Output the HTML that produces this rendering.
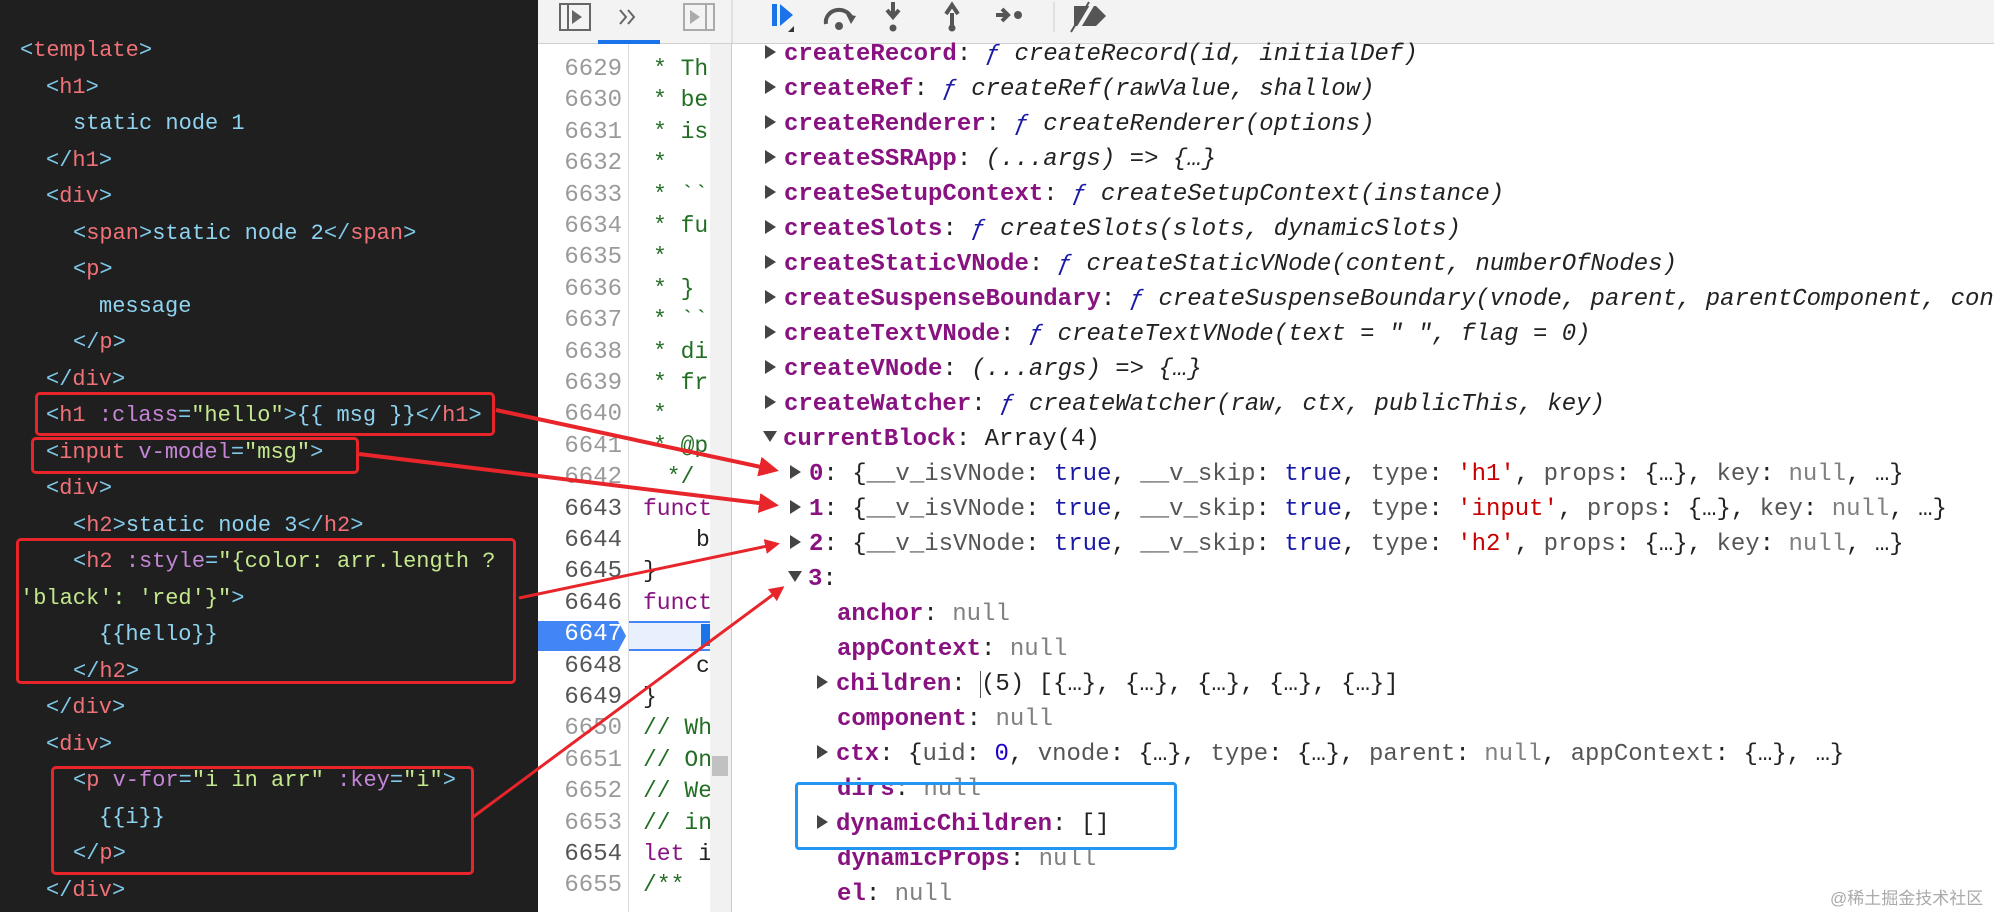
<!DOCTYPE html>
<html><head><meta charset="utf-8"><style>
*{margin:0;padding:0;box-sizing:border-box}
body{width:1994px;height:912px;overflow:hidden;background:#fff;position:relative;font-family:"Liberation Mono",monospace}
#left{position:absolute;left:0;top:0;width:538px;height:912px;background:#1f1f1f;overflow:hidden}
#left .r{position:absolute;left:0;height:36.5px;line-height:36.5px;font-size:22px;white-space:pre;color:#8fd3f0}
.b{color:#7fc8e8}.t{color:#f07178}.x{color:#8fd3f0}.a{color:#c586d8}.s{color:#c3e88d}
#tb{position:absolute;left:538px;top:0;width:1456px;height:44px;background:#f3f3f3;border-bottom:1px solid #d0d0d0}
#gut{position:absolute;left:538px;top:44px;width:90px;height:868px;background:#fff}
#code{position:absolute;left:628px;top:44px;width:82px;height:868px;background:#fff;border-left:1px solid #ddd;overflow:hidden}
#sb{position:absolute;left:710px;top:44px;width:22px;height:868px;background:#f1f1f1;border-right:1px solid #ccc}
.g{position:absolute;right:6px;width:79px;text-align:right;font-size:24px;color:#9a9a9a;height:31.4px;line-height:31.4px}
.c{position:absolute;left:24px;font-size:23px;white-space:pre;height:31.4px;line-height:31.4px;color:#236e25}
.p{position:absolute;height:35px;line-height:35px;font-size:24px;white-space:pre;color:#222}
.k{color:#881280;font-weight:bold}.f{color:#1a1aa6;font-style:italic}.i{font-style:italic;color:#222}
.tr{color:#1a1aa6}.st{color:#c80000}.nu{color:#808080}.n{color:#1c00cf}.gy{color:#555}
.tri{display:inline-block;width:0;height:0;border-top:7px solid transparent;border-bottom:7px solid transparent;border-left:11px solid #444;margin-right:8px;vertical-align:middle;position:relative;top:-2px}
.tri.d{border-left:7px solid transparent;border-right:7px solid transparent;border-top:11px solid #444;border-bottom:0;margin-right:6px}
.box{position:absolute;border:3px solid #e8252a;border-radius:5px}
</style></head><body>
<div id="left">
<div class="r" style="top:33px;left:20px"><span class="b">&lt;</span><span class="t">template</span><span class="b">&gt;</span></div>
<div class="r" style="top:69.5px;left:46px"><span class="b">&lt;</span><span class="t">h1</span><span class="b">&gt;</span></div>
<div class="r" style="top:106px;left:73px">static node 1</div>
<div class="r" style="top:142.5px;left:46px"><span class="b">&lt;/</span><span class="t">h1</span><span class="b">&gt;</span></div>
<div class="r" style="top:179px;left:46px"><span class="b">&lt;</span><span class="t">div</span><span class="b">&gt;</span></div>
<div class="r" style="top:215.5px;left:73px"><span class="b">&lt;</span><span class="t">span</span><span class="b">&gt;</span>static node 2<span class="b">&lt;/</span><span class="t">span</span><span class="b">&gt;</span></div>
<div class="r" style="top:252px;left:73px"><span class="b">&lt;</span><span class="t">p</span><span class="b">&gt;</span></div>
<div class="r" style="top:288.5px;left:99px">message</div>
<div class="r" style="top:325px;left:73px"><span class="b">&lt;/</span><span class="t">p</span><span class="b">&gt;</span></div>
<div class="r" style="top:361.5px;left:46px"><span class="b">&lt;/</span><span class="t">div</span><span class="b">&gt;</span></div>
<div class="r" style="top:398px;left:46px"><span class="b">&lt;</span><span class="t">h1</span> <span class="a">:class</span><span class="b">=</span><span class="s">"hello"</span><span class="b">&gt;</span>{{ msg }}<span class="b">&lt;/</span><span class="t">h1</span><span class="b">&gt;</span></div>
<div class="r" style="top:434.5px;left:46px"><span class="b">&lt;</span><span class="t">input</span> <span class="a">v-model</span><span class="b">=</span><span class="s">"msg"</span><span class="b">&gt;</span></div>
<div class="r" style="top:471px;left:46px"><span class="b">&lt;</span><span class="t">div</span><span class="b">&gt;</span></div>
<div class="r" style="top:507.5px;left:73px"><span class="b">&lt;</span><span class="t">h2</span><span class="b">&gt;</span>static node 3<span class="b">&lt;/</span><span class="t">h2</span><span class="b">&gt;</span></div>
<div class="r" style="top:544px;left:73px"><span class="b">&lt;</span><span class="t">h2</span> <span class="a">:style</span><span class="b">=</span><span class="s">"{color: arr.length ?</span></div>
<div class="r" style="top:580.5px;left:20px"><span class="s">'black': 'red'}"</span><span class="b">&gt;</span></div>
<div class="r" style="top:617px;left:99px">{{hello}}</div>
<div class="r" style="top:653.5px;left:73px"><span class="b">&lt;/</span><span class="t">h2</span><span class="b">&gt;</span></div>
<div class="r" style="top:690px;left:46px"><span class="b">&lt;/</span><span class="t">div</span><span class="b">&gt;</span></div>
<div class="r" style="top:726.5px;left:46px"><span class="b">&lt;</span><span class="t">div</span><span class="b">&gt;</span></div>
<div class="r" style="top:763px;left:73px"><span class="b">&lt;</span><span class="t">p</span> <span class="a">v-for</span><span class="b">=</span><span class="s">"i in arr"</span> <span class="a">:key</span><span class="b">=</span><span class="s">"i"</span><span class="b">&gt;</span></div>
<div class="r" style="top:799.5px;left:99px">{{i}}</div>
<div class="r" style="top:836px;left:73px"><span class="b">&lt;/</span><span class="t">p</span><span class="b">&gt;</span></div>
<div class="r" style="top:872.5px;left:46px"><span class="b">&lt;/</span><span class="t">div</span><span class="b">&gt;</span></div>
<div class="box" style="left:35px;top:392px;width:460px;height:44px"></div>
<div class="box" style="left:31px;top:437px;width:328px;height:37px"></div>
<div class="box" style="left:16px;top:538px;width:500px;height:146px"></div>
<div class="box" style="left:51px;top:766px;width:423px;height:109px"></div>
</div>

<div id="tb">
<svg width="1456" height="44" style="position:absolute;left:0;top:0">
<g fill="none" stroke="#666" stroke-width="2">
<rect x="22" y="4" width="30" height="26"/><line x1="30" y1="4" x2="30" y2="30"/>
<rect x="146" y="4" width="30" height="26" stroke="#aaa"/><line x1="168" y1="4" x2="168" y2="30" stroke="#aaa"/>
<path d="M82 10l6 7-6 7M90 10l6 7-6 7"/>
</g>
<path d="M34 10l10 7-10 7z" fill="#666"/><path d="M152 10l10 7-10 7z" fill="#aaa"/>
<rect x="60" y="40" width="62" height="4" fill="#1a73e8"/>
<line x1="194" y1="0" x2="194" y2="44" stroke="#ccc"/>
<rect x="234" y="4" width="5" height="22" fill="#1a73e8"/><path d="M242 4l13 11-13 11z" fill="#1a73e8"/><path d="M250 32l6-6v6z" fill="#333"/>
<path d="M288 24a13 12 0 0 1 26-4" fill="none" stroke="#555" stroke-width="4"/><path d="M308 14l10 2-5 8z" fill="#555"/><circle cx="301" cy="26" r="4" fill="#555"/>
<path d="M355 2v12M349 10l6 7 6-7" stroke="#555" stroke-width="4" fill="none"/><circle cx="355" cy="28" r="3.5" fill="#555"/>
<path d="M414 27v-14M408 14l6-9 6 9" stroke="#555" stroke-width="4" fill="none"/><circle cx="414" cy="28" r="3.5" fill="#555"/>
<path d="M458 15h10M464 9l6 6-6 6" stroke="#555" stroke-width="4" fill="none"/><circle cx="480" cy="15" r="4" fill="#555"/>
<line x1="516" y1="2" x2="516" y2="32" stroke="#ccc"/>
<path d="M536 6h22l10 10-10 10h-22z" fill="#555"/><line x1="538" y1="32" x2="556" y2="2" stroke="#f3f3f3" stroke-width="4"/><line x1="533" y1="32" x2="551" y2="2" stroke="#555" stroke-width="2"/>
</svg>
</div>

<div id="gut">
<div class="g" style="top:10px">6629</div><div class="g" style="top:41.4px">6630</div><div class="g" style="top:72.8px">6631</div><div class="g" style="top:104.2px">6632</div><div class="g" style="top:135.6px">6633</div><div class="g" style="top:167px">6634</div><div class="g" style="top:198.4px">6635</div><div class="g" style="top:229.8px">6636</div><div class="g" style="top:261.2px">6637</div><div class="g" style="top:292.6px">6638</div><div class="g" style="top:324px">6639</div><div class="g" style="top:355.4px">6640</div><div class="g" style="top:386.8px">6641</div><div class="g" style="top:418.2px">6642</div><div class="g" style="top:449.6px;color:#555">6643</div><div class="g" style="top:481px;color:#555">6644</div><div class="g" style="top:512.4px;color:#555">6645</div><div class="g" style="top:543.8px;color:#555">6646</div>
<svg style="position:absolute;left:0;top:577px" width="90" height="30"><path d="M0 0h80l8 15-8 15H0z" fill="#4285f4"/></svg>
<div class="g" style="top:575.2px;color:#fff">6647</div>
<div class="g" style="top:606.6px;color:#555">6648</div><div class="g" style="top:638px;color:#555">6649</div><div class="g" style="top:669.4px">6650</div><div class="g" style="top:700.8px">6651</div><div class="g" style="top:732.2px">6652</div><div class="g" style="top:763.6px">6653</div><div class="g" style="top:795px;color:#555">6654</div><div class="g" style="top:826.4px">6655</div>
</div>
<div id="code">
<div class="c" style="top:10px">* Th</div><div class="c" style="top:41.4px">* be</div><div class="c" style="top:72.8px">* is</div><div class="c" style="top:104.2px">*</div><div class="c" style="top:135.6px">* ``</div><div class="c" style="top:167px">* fu</div><div class="c" style="top:198.4px">*</div><div class="c" style="top:229.8px">* }</div><div class="c" style="top:261.2px">* ``</div><div class="c" style="top:292.6px">* di</div><div class="c" style="top:324px">* fr</div><div class="c" style="top:355.4px">*</div><div class="c" style="top:386.8px">* @p</div><div class="c" style="top:418.2px"> */</div>
<div class="c" style="top:449.6px;left:14px;color:#881280">funct</div><div class="c" style="top:481px;left:67px;color:#222">b</div><div class="c" style="top:512.4px;left:14px;color:#222">}</div><div class="c" style="top:543.8px;left:14px;color:#881280">funct</div>
<div style="position:absolute;left:0;top:577px;width:82px;height:30px;background:#e8f0fe;border-top:2px solid #4285f4;border-bottom:2px solid #4285f4"></div><div style="position:absolute;left:72px;top:580px;width:10px;height:22px;background:#1a73e8"></div>
<div class="c" style="top:606.6px;left:67px;color:#222">c</div><div class="c" style="top:638px;left:14px;color:#222">}</div><div class="c" style="top:669.4px;left:14px">// Wh</div><div class="c" style="top:700.8px;left:14px">// On</div><div class="c" style="top:732.2px;left:14px">// We</div><div class="c" style="top:763.6px;left:14px">// in</div><div class="c" style="top:795px;left:14px;color:#881280">let <span style="color:#222">i</span></div><div class="c" style="top:826.4px;left:14px">/**</div>
</div>
<div id="sb"><div style="position:absolute;left:2px;top:712px;width:16px;height:20px;background:#c1c1c1"></div></div>

<div class="p" style="left:765px;top:37px"><span class="tri"></span><span class="k">createRecord</span>: <span class="f">ƒ</span> <span class="i">createRecord(id, initialDef)</span></div>
<div class="p" style="left:765px;top:72px"><span class="tri"></span><span class="k">createRef</span>: <span class="f">ƒ</span> <span class="i">createRef(rawValue, shallow)</span></div>
<div class="p" style="left:765px;top:107px"><span class="tri"></span><span class="k">createRenderer</span>: <span class="f">ƒ</span> <span class="i">createRenderer(options)</span></div>
<div class="p" style="left:765px;top:142px"><span class="tri"></span><span class="k">createSSRApp</span>: <span class="i">(...args) =&gt; {…}</span></div>
<div class="p" style="left:765px;top:177px"><span class="tri"></span><span class="k">createSetupContext</span>: <span class="f">ƒ</span> <span class="i">createSetupContext(instance)</span></div>
<div class="p" style="left:765px;top:212px"><span class="tri"></span><span class="k">createSlots</span>: <span class="f">ƒ</span> <span class="i">createSlots(slots, dynamicSlots)</span></div>
<div class="p" style="left:765px;top:247px"><span class="tri"></span><span class="k">createStaticVNode</span>: <span class="f">ƒ</span> <span class="i">createStaticVNode(content, numberOfNodes)</span></div>
<div class="p" style="left:765px;top:282px"><span class="tri"></span><span class="k">createSuspenseBoundary</span>: <span class="f">ƒ</span> <span class="i">createSuspenseBoundary(vnode, parent, parentComponent, con</span></div>
<div class="p" style="left:765px;top:317px"><span class="tri"></span><span class="k">createTextVNode</span>: <span class="f">ƒ</span> <span class="i">createTextVNode(text = " ", flag = 0)</span></div>
<div class="p" style="left:765px;top:352px"><span class="tri"></span><span class="k">createVNode</span>: <span class="i">(...args) =&gt; {…}</span></div>
<div class="p" style="left:765px;top:387px"><span class="tri"></span><span class="k">createWatcher</span>: <span class="f">ƒ</span> <span class="i">createWatcher(raw, ctx, publicThis, key)</span></div>
<div class="p" style="left:763px;top:422px"><span class="tri d"></span><span class="k">currentBlock</span>: Array(4)</div>
<div class="p" style="left:790px;top:457px"><span class="tri"></span><span class="k">0</span>: {<span class="gy">__v_isVNode</span>: <span class="tr">true</span>, <span class="gy">__v_skip</span>: <span class="tr">true</span>, <span class="gy">type</span>: <span class="st">'h1'</span>, <span class="gy">props</span>: {…}, <span class="gy">key</span>: <span class="nu">null</span>, …}</div>
<div class="p" style="left:790px;top:492px"><span class="tri"></span><span class="k">1</span>: {<span class="gy">__v_isVNode</span>: <span class="tr">true</span>, <span class="gy">__v_skip</span>: <span class="tr">true</span>, <span class="gy">type</span>: <span class="st">'input'</span>, <span class="gy">props</span>: {…}, <span class="gy">key</span>: <span class="nu">null</span>, …}</div>
<div class="p" style="left:790px;top:527px"><span class="tri"></span><span class="k">2</span>: {<span class="gy">__v_isVNode</span>: <span class="tr">true</span>, <span class="gy">__v_skip</span>: <span class="tr">true</span>, <span class="gy">type</span>: <span class="st">'h2'</span>, <span class="gy">props</span>: {…}, <span class="gy">key</span>: <span class="nu">null</span>, …}</div>
<div class="p" style="left:788px;top:562px"><span class="tri d"></span><span class="k">3</span>:</div>
<div class="p" style="left:837px;top:597px"><span class="k">anchor</span>: <span class="nu">null</span></div>
<div class="p" style="left:837px;top:632px"><span class="k">appContext</span>: <span class="nu">null</span></div>
<div class="p" style="left:817px;top:667px"><span class="tri"></span><span class="k">children</span>: <span style="border-left:1px solid #555"></span>(5) [{…}, {…}, {…}, {…}, {…}]</div>
<div class="p" style="left:837px;top:702px"><span class="k">component</span>: <span class="nu">null</span></div>
<div class="p" style="left:817px;top:737px"><span class="tri"></span><span class="k">ctx</span>: {<span class="gy">uid</span>: <span class="n">0</span>, <span class="gy">vnode</span>: {…}, <span class="gy">type</span>: {…}, <span class="gy">parent</span>: <span class="nu">null</span>, <span class="gy">appContext</span>: {…}, …}</div>
<div class="p" style="left:837px;top:772px"><span class="k">dirs</span>: <span class="nu">null</span></div>
<div class="p" style="left:817px;top:807px"><span class="tri"></span><span class="k">dynamicChildren</span>: []</div>
<div class="p" style="left:837px;top:842px"><span class="k">dynamicProps</span>: <span class="nu">null</span></div>
<div class="p" style="left:837px;top:877px"><span class="k">el</span>: <span class="nu">null</span></div>
<div style="position:absolute;left:795px;top:782px;width:382px;height:68px;border:3px solid #2196f3;border-radius:4px"></div>
<div style="position:absolute;left:1830px;top:884px;font:17px 'Liberation Sans','Noto Sans CJK SC',sans-serif;color:#aaa">@稀土掘金技术社区</div>

<svg width="1994" height="912" style="position:absolute;left:0;top:0;pointer-events:none">
<defs><marker id="ah" markerWidth="5" markerHeight="5" refX="4" refY="2.5" orient="auto"><path d="M0 0L5 2.5L0 5z" fill="#e8252a"/></marker></defs>
<g stroke="#e8252a" fill="none" marker-end="url(#ah)">
<line x1="496" y1="410" x2="775" y2="470" stroke-width="4"/>
<line x1="359" y1="454" x2="775" y2="505" stroke-width="4"/>
<line x1="519" y1="598" x2="777" y2="544" stroke-width="3"/>
<line x1="473" y1="817" x2="782" y2="588" stroke-width="3"/>
</g>
</svg>
</body></html>
